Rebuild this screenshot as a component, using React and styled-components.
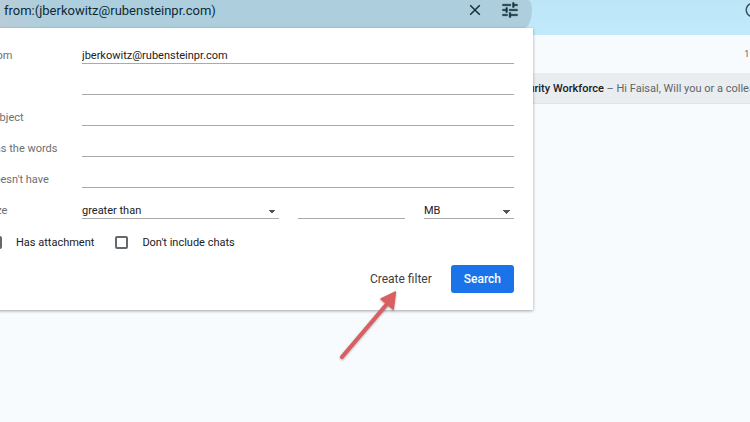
import React, { useState } from "react";
import styled, { createGlobalStyle } from "styled-components";

const TEXT_FIELDS = [
  { id: "from", label: "From", value: "jberkowitz@rubensteinpr.com" },
  { id: "to", label: "To", value: "" },
  { id: "subject", label: "Subject", value: "" },
  { id: "has", label: "Has the words", value: "" },
  { id: "not", label: "Doesn't have", value: "" },
];

const CloseIcon = () => (
  <svg width="12" height="12" viewBox="0 0 12 12" fill="none" stroke="#12303b" strokeWidth="1.5" aria-hidden="true">
    <path d="M1.2 1.2 10.8 10.8M10.8 1.2 1.2 10.8" />
  </svg>
);

const TuneIcon = () => (
  <svg width="20" height="20" viewBox="0 0 24 24" fill="#12303b" aria-hidden="true">
    <path
      d="M3 17v2h6v-2H3zM3 5v2h10V5H3zm10 16v-2h8v-2h-8v-2h-2v6h2zM7 9v2H3v2h4v2h2V9H7zm14 4v-2H11v2h10zm-6-4h2V7h4V5h-4V3h-2v6z"
      stroke="#12303b"
      strokeWidth="0.4"
    />
  </svg>
);

const HelpIcon = () => (
  <svg width="18" height="18" viewBox="0 0 24 24" fill="#35545f" aria-hidden="true">
    <path d="M11 18h2v-2h-2v2zm1-16C6.48 2 2 6.48 2 12s4.48 10 10 10 10-4.48 10-10S17.52 2 12 2zm0 18c-4.41 0-8-3.59-8-8s3.59-8 8-8 8 3.59 8 8-3.59 8-8 8zm0-14c-2.21 0-4 1.79-4 4h2c0-1.1.9-2 2-2s2 .9 2 2c0 2-3 1.75-3 5h2c0-2.25 3-2.5 3-5 0-2.21-1.79-4-4-4z" />
  </svg>
);

const Arrow = () => (
  <ArrowDrawing width="64" height="80" viewBox="0 0 64 80" aria-hidden="true">
    <path d="M6 72 51 19" stroke="#d96062" strokeWidth="4.2" strokeLinecap="round" />
    <path d="M59.5 7 45 14l12.3 10.2z" fill="#d96062" stroke="#d96062" strokeWidth="1.4" strokeLinejoin="round" />
  </ArrowDrawing>
);

const App = () => {
  const [query, setQuery] = useState("from:(jberkowitz@rubensteinpr.com)");

  return (
    <Viewport>
      <GlobalStyle />
      <Mail>
        <Header>
          <SearchBar>
            <SearchInput aria-label="Search mail" value={query} onChange={(e) => setQuery(e.target.value)} />
            <IconButton aria-label="Clear search" onClick={() => setQuery("")}>
              <CloseIcon />
            </IconButton>
            <IconButton aria-label="Show search options">
              <TuneIcon />
            </IconButton>
          </SearchBar>
          <IconButton aria-label="Support">
            <HelpIcon />
          </IconButton>
        </Header>

        <Pager>1–1 of 1</Pager>
        <MailRow>
          <Subject>Security Workforce</Subject>
          <Snippet> – Hi Faisal, Will you or a colleague</Snippet>
        </MailRow>

        <FilterPanel onSubmit={(e) => e.preventDefault()}>
          {TEXT_FIELDS.map(({ id, label, value }) => (
            <Row key={id}>
              <Label htmlFor={id}>{label}</Label>
              <TextInput id={id} defaultValue={value} />
            </Row>
          ))}
          <Row>
            <Label htmlFor="size">Size</Label>
            <SizeFields>
              <Select id="size">
                <option>greater than</option>
                <option>less than</option>
              </Select>
              <TextInput aria-label="Size value" />
              <Select aria-label="Size unit">
                <option>MB</option>
                <option>KB</option>
                <option>Bytes</option>
              </Select>
            </SizeFields>
          </Row>
          <Checks>
            <CheckLabel>
              <Checkbox type="checkbox" />
              Has attachment
            </CheckLabel>
            <CheckLabel>
              <Checkbox type="checkbox" />
              Don't include chats
            </CheckLabel>
          </Checks>
          <Actions>
            <Button type="button">Create filter</Button>
            <Button type="submit" $primary>
              Search
            </Button>
          </Actions>
        </FilterPanel>
        <Arrow />
      </Mail>
    </Viewport>
  );
};

const GlobalStyle = createGlobalStyle`
  * {
    box-sizing: border-box;
  }

  body {
    margin: 0;
    background-color: #f7fbfd;
    color: #202124;
    font-family: Roboto, "Liberation Sans", sans-serif;
    font-size: 11px;
  }

  button, input, select {
    font: inherit;
    color: inherit;
  }
`;

const Viewport = styled.div`
  min-height: 100vh;
  overflow: hidden;
`;

/* the mail page runs past both sides of the window */
const Mail = styled.main`
  position: relative;
  min-height: 100vh;
  margin: 0 -40px 0 -13px;
  background-color: #f7fbfd;
`;

const Header = styled.header`
  display: flex;
  justify-content: space-between;
  height: 35px;
  padding-right: 20px;
  background: linear-gradient(#bce5f7, #c1ebfb);
`;

const SearchBar = styled.div`
  display: flex;
  flex: 0 0 545px;
  height: 28px;
  padding: 0 5px 8px 17px;
  background: linear-gradient(90deg, #bccbd7, #adcfdd 60px, #adcfdd);
  border-radius: 0 4px 8px 0 / 0 10px 18px 0;
`;

const SearchInput = styled.input`
  flex: 1;
  min-width: 0;
  height: 20px;
  padding: 0;
  border: 0;
  background: none;
  color: #0d2a36;
  font-size: 13px;
  outline: none;
`;

const IconButton = styled.button`
  display: flex;
  align-items: center;
  justify-content: center;
  width: 35px;
  height: 20px;
  padding: 0;
  border: 0;
  background: none;
  cursor: pointer;
`;

const Pager = styled.div`
  height: 38px;
  padding-right: 12px;
  color: #5f6368;
  font-size: 9px;
  line-height: 38px;
  text-align: right;
`;

const MailRow = styled.div`
  height: 31px;
  padding-left: 523px;
  overflow: hidden;
  background-color: #eaedf0;
  box-shadow: inset 0 -1px 0 #e2e5e8;
  line-height: 31px;
  white-space: pre;
`;

const Subject = styled.span`
  font-weight: 500;
`;

const Snippet = styled.span`
  color: #5f6368;
`;

const FilterPanel = styled.form`
  position: absolute;
  top: 28px;
  left: 0;
  width: 546px;
  padding: 5px 19px 17px 0;
  background-color: #fff;
  box-shadow: 0 1px 3px rgba(0, 0, 0, 0.35);
`;

const Row = styled.div`
  display: flex;
  align-items: flex-end;
  height: 31px;
`;

const Label = styled.label`
  flex: 0 0 95px;
  color: #6b6f73;
  line-height: 16px;
`;

const TextInput = styled.input`
  flex: 1;
  width: 100%;
  min-width: 0;
  height: 16px;
  padding: 0;
  border: 0;
  border-bottom: 1px solid #aaa;
  border-radius: 0;
  background: none;
  outline: none;
`;

const SizeFields = styled.div`
  display: grid;
  grid-template-columns: 197px 1fr 90px;
  gap: 19px;
  flex: 1;
`;

const Select = styled.select`
  height: 16px;
  padding: 0;
  border: 0;
  border-bottom: 1px solid #aaa;
  border-radius: 0;
  appearance: none;
  background:
    linear-gradient(to bottom right, #555 50%, transparent 50%) right 3px top 7px / 4px 4px no-repeat,
    linear-gradient(to bottom left, #555 50%, transparent 50%) right 7px top 7px / 4px 4px no-repeat;
  outline: none;
`;

const Checks = styled.div`
  display: flex;
  gap: 21px;
  height: 31px;
  padding: 16px 0 0 2px;
`;

const CheckLabel = styled.label`
  display: flex;
  align-items: center;
  gap: 14px;
  height: 14px;
  white-space: nowrap;
`;

const Checkbox = styled.input`
  width: 13px;
  height: 13px;
  margin: 0;
  border: 2px solid #66696c;
  border-radius: 2px;
  appearance: none;
`;

const Actions = styled.div`
  display: flex;
  justify-content: flex-end;
  gap: 6px;
  padding-top: 15px;
`;

const Button = styled.button`
  height: 28px;
  padding: 0 13px;
  border: 0;
  border-radius: 3px;
  background-color: ${({ $primary }) => ($primary ? "#1a73e8" : "transparent")};
  color: ${({ $primary }) => ($primary ? "#fff" : "#3c4043")};
  font-size: 12px;
  font-weight: ${({ $primary }) => ($primary ? 500 : 400)};
  cursor: pointer;
`;

const ArrowDrawing = styled.svg`
  position: absolute;
  top: 285px;
  left: 349px;
  filter: drop-shadow(0 1px 1px rgba(0, 0, 0, 0.3));
  pointer-events: none;
`;

export default App;
